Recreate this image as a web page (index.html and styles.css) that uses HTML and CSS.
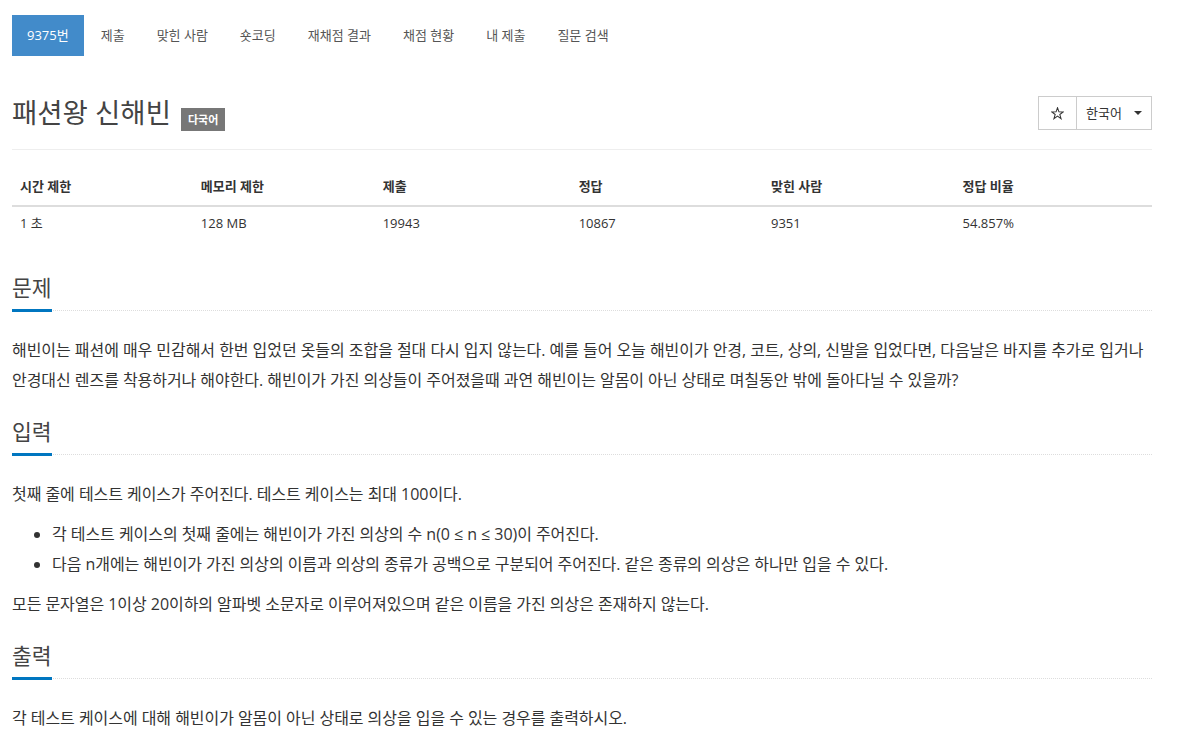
FILE: index.html
```html
<!DOCTYPE html>
<html lang="ko">
<head>
<meta charset="utf-8">
<title>9375번: 패션왕 신해빈</title>
<link rel="stylesheet" href="styles.css">
</head>
<body>
<div class="container">
  <ul class="nav">
    <li class="active"><a href="#">9375번</a></li>
    <li><a href="#">제출</a></li>
    <li><a href="#">맞힌 사람</a></li>
    <li><a href="#">숏코딩</a></li>
    <li><a href="#">재채점 결과</a></li>
    <li><a href="#">채점 현황</a></li>
    <li><a href="#">내 제출</a></li>
    <li><a href="#">질문 검색</a></li>
  </ul>

  <div class="page-header">
    <h1 class="title"><span class="title-text">패션왕 신해빈</span><span class="label">다국어</span></h1>
    <div class="btn-group">
      <button class="btn btn-star" type="button"><svg width="13" height="13" viewBox="0 0 14 14"><polygon points="7,0.8 8.53,5.2 13.18,5.29 9.47,8.1 10.82,12.56 7,9.9 3.18,12.56 4.53,8.1 0.82,5.29 5.47,5.2" fill="none" stroke="#333" stroke-width="1.1" stroke-linejoin="miter"/></svg></button>
      <button class="btn btn-lang" type="button">한국어<span class="caret"></span></button>
    </div>
  </div>

  <table class="info">
    <thead>
      <tr>
        <th class="c1">시간 제한</th>
        <th class="c2">메모리 제한</th>
        <th class="c3">제출</th>
        <th class="c4">정답</th>
        <th class="c5">맞힌 사람</th>
        <th class="c6">정답 비율</th>
      </tr>
    </thead>
    <tbody>
      <tr>
        <td>1 초</td>
        <td>128 MB</td>
        <td>19943</td>
        <td>10867</td>
        <td>9351</td>
        <td>54.857%</td>
      </tr>
    </tbody>
  </table>

  <section class="problem-section">
    <div class="headline"><h2>문제</h2></div>
    <p>해빈이는 패션에 매우 민감해서 한번 입었던 옷들의 조합을 절대 다시 입지 않는다. 예를 들어 오늘 해빈이가 안경, 코트, 상의, 신발을 입었다면, 다음날은 바지를 추가로 입거나 안경대신 렌즈를 착용하거나 해야한다. 해빈이가 가진 의상들이 주어졌을때 과연 해빈이는 알몸이 아닌 상태로 며칠동안 밖에 돌아다닐 수 있을까?</p>
  </section>

  <section class="problem-section">
    <div class="headline"><h2>입력</h2></div>
    <p>첫째 줄에 테스트 케이스가 주어진다. 테스트 케이스는 최대 100이다.</p>
    <ul>
      <li>각 테스트 케이스의 첫째 줄에는 해빈이가 가진 의상의 수 n(0 ≤ n ≤ 30)이 주어진다.</li>
      <li>다음 n개에는 해빈이가 가진 의상의 이름과 의상의 종류가 공백으로 구분되어 주어진다. 같은 종류의 의상은 하나만 입을 수 있다.</li>
    </ul>
    <p>모든 문자열은 1이상 20이하의 알파벳 소문자로 이루어져있으며 같은 이름을 가진 의상은 존재하지 않는다.</p>
  </section>

  <section class="problem-section">
    <div class="headline"><h2>출력</h2></div>
    <p>각 테스트 케이스에 대해 해빈이가 알몸이 아닌 상태로 의상을 입을 수 있는 경우를 출력하시오.</p>
  </section>
</div>
</body>
</html>
```

FILE: styles.css
```css
html, body {
  margin: 0;
  padding: 0;
  background: #fff;
}

body {
  font-family: "Open Sans", "Noto Sans CJK KR", sans-serif;
  color: #333;
}

.container {
  width: 1140px;
  padding: 15px 12px 0;
}

/* nav pills */
.nav {
  display: flex;
  gap: 2px;
  list-style: none;
  margin: 0;
  padding: 0;
}

.nav a {
  display: block;
  padding: 10px 15px;
  line-height: 21px;
  font-size: 13px;
  color: #555;
  text-decoration: none;
}

.nav .active a {
  background: #428bca;
  color: #fff;
}

/* header */
.page-header {
  display: flex;
  justify-content: space-between;
  align-items: center;
  margin-top: 40px;
  padding-bottom: 19px;
  border-bottom: 1px solid #eee;
}

.title {
  display: flex;
  align-items: center;
  height: 34px;
  margin: 0;
  font-size: 27.5px;
  font-weight: 400;
  line-height: 34px;
  color: #444;
}

.label {
  margin: 12px 0 0 10px;
  padding: 4px 7px;
  font-size: 11px;
  font-weight: 700;
  line-height: 15px;
  color: #fff;
  background: #777;
}

.btn-group {
  display: flex;
}

.btn {
  display: flex;
  align-items: center;
  height: 34px;
  margin: 0;
  border: 1px solid #ccc;
  background: #fff;
  color: #333;
  font-family: inherit;
  font-size: 13px;
  line-height: 20px;
  cursor: pointer;
}

.btn-star {
  padding: 0 12px;
  width: 39px;
  justify-content: center;
}

.btn-lang {
  margin-left: -1px;
  padding: 0 8px 0 9px;
  width: 76px;
}

.caret {
  display: inline-block;
  width: 0;
  height: 0;
  margin-left: 12px;
  border-top: 4px solid #333;
  border-left: 4px solid transparent;
  border-right: 4px solid transparent;
}

/* info table */
.info {
  width: 100%;
  border-collapse: collapse;
  margin: 20px 0 36px;
  font-size: 13px;
}

.info th,
.info td {
  padding: 7px 8px;
  line-height: 18px;
  text-align: left;
}

.info th {
  padding-bottom: 10px;
  font-weight: 700;
  border-bottom: 2px solid #ddd;
}

.c1, .c2 { width: 182px; }
.c3 { width: 196px; }
.c4, .c5 { width: 192px; }
.c6 { width: 196px; }

/* problem sections */
.problem-section + .problem-section {
  margin-top: 24px;
}

.headline {
  display: flex;
  border-bottom: 1px dotted #ddd;
  margin-bottom: 24px;
}

.headline h2 {
  margin: 0 0 -2px;
  padding-bottom: 8px;
  font-size: 21.5px;
  font-weight: 400;
  line-height: 26px;
  color: #444;
  border-bottom: 3px solid #0076c0;
}

.problem-section p,
.problem-section ul {
  margin: 0 0 10px;
  font-size: 16px;
  letter-spacing: -0.05px;
  line-height: 30px;
}

.problem-section ul {
  padding-left: 40px;
}
```
